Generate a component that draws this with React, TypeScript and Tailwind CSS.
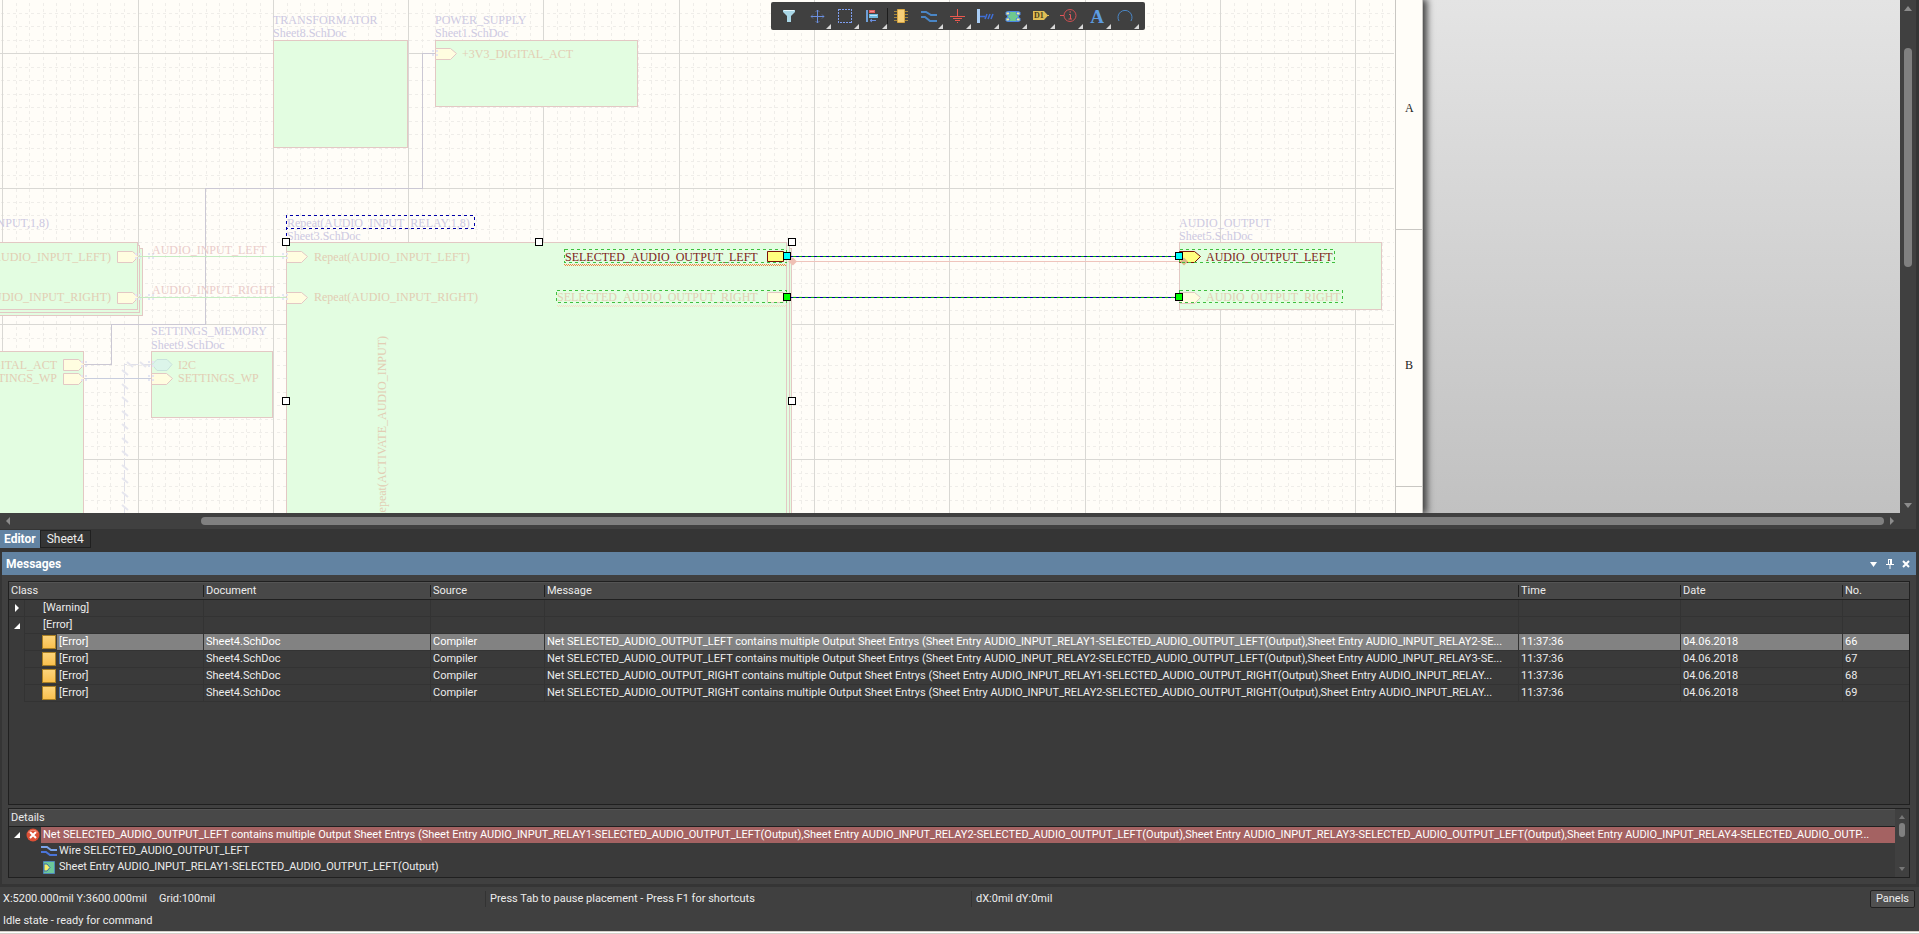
import type { ReactNode } from 'react';
import { useState } from 'react';

const INK = '#cdc9e2';
const RUST = '#e2cdb4';
const EDGE = '#e3c8c4';
const SHEET = '#e3fde1';

const majorX = [2, 138, 273, 408, 543, 679, 814, 949, 1085, 1220, 1355];
const majorY = [53, 188, 324, 459, 594, 729];
const minorOffsets = [14, 27, 41, 54, 68, 81, 95, 108, 122];

const minorX = [-133, ...majorX].flatMap((x) => minorOffsets.map((o) => x + o)).filter((x) => x > 0 && x < 1394);
const minorY = [-82, ...majorY].flatMap((y) => minorOffsets.map((o) => y + o)).filter((y) => y > 0);

function Grid() {
  return (
    <g shapeRendering="crispEdges">
      <g stroke="#efede9" strokeDasharray="3 3">
        {minorX.map((x) => (
          <line key={x} x1={x + 0.5} x2={x + 0.5} y1={3} y2={900} />
        ))}
        {minorY.map((y) => (
          <line key={y} x1={1} x2={1394} y1={y + 0.5} y2={y + 0.5} />
        ))}
      </g>
      <g stroke="#d9d8d4">
        {majorX.map((x) => (
          <line key={x} x1={x + 0.5} x2={x + 0.5} y1={0} y2={900} />
        ))}
        {majorY.map((y) => (
          <line key={y} x1={0} x2={1394} y1={y + 0.5} y2={y + 0.5} />
        ))}
      </g>
    </g>
  );
}

type PortProps = { x: number; y: number; fill?: string; stroke?: string; flat?: boolean };

function Port({ x, y, fill = '#fffde0', stroke = EDGE, flat }: PortProps) {
  const d = flat
    ? `M${x} ${y - 5}h16v10h-16z`
    : `M${x} ${y - 5}h15l6 5l-6 6h-15z`;
  return <path d={d} fill={fill} stroke={stroke} />;
}

function Joint({ x, y }: { x: number; y: number }) {
  return (
    <g fill="#e4e6f2" shapeRendering="crispEdges">
      <rect x={x - 3} y={y - 3} width="2" height="2" />
      <rect x={x + 1} y={y - 3} width="2" height="2" />
      <rect x={x - 3} y={y + 1} width="2" height="2" />
      <rect x={x + 1} y={y + 1} width="2" height="2" />
    </g>
  );
}

function Handle({ x, y, fill = '#ffffff' }: { x: number; y: number; fill?: string }) {
  return <rect x={x - 3.5} y={y - 3.5} width="7" height="7" fill={fill} stroke="#000" shapeRendering="crispEdges" />;
}

function SelectedWire({ y }: { y: number }) {
  return (
    <g shapeRendering="crispEdges">
      <line x1="790" x2="1176" y1={y} y2={y} stroke="#00b000" />
      <line x1="790" x2="1176" y1={y} y2={y} stroke="#0000a8" strokeDasharray="3 3" />
    </g>
  );
}

function Outline({ x, y, w, h }: { x: number; y: number; w: number; h: number }) {
  return (
    <rect x={x} y={y} width={w} height={h} fill="none" stroke="#3fbf3f" strokeDasharray="3 3" shapeRendering="crispEdges" />
  );
}

function Schematic() {
  const slashes = Array.from({ length: 30 }, (_, i) => 372 + Math.round(i * 13.5));
  return (
    <svg
      className="absolute left-0 top-0 h-full w-[1423px] bg-[#fffdf8] font-['Liberation_Serif',serif] text-[12px]"
      role="img"
      aria-label="Schematic sheet"
    >
      <Grid />
      {/* Sheet border */}
      <g stroke="#c9c7c3" shapeRendering="crispEdges">
        <rect x="1395" y="-1" width="27" height="2000" fill="#fffdf8" stroke="none" />
        <path d="M1395.5 0V2000M1422.5 0V2000M1395 229.5H1422M1395 486.5H1422" fill="none" />
      </g>
      <text x="1405" y="112" fill="#222">A</text>
      <text x="1405" y="369" fill="#222">B</text>

      {/* Supply and control wires */}
      <g fill="none" shapeRendering="crispEdges">
        <path d="M435 53.5H422.5V188.5H205.5V324.5H111.5V364.5H84" stroke="#cbc8d4" />
        <path d="M84 378.5H151" stroke="#c8cdde" />
        <path d="M151 364.5H124.5V900" stroke="#e0e0e9" strokeDasharray="9 3" />
      </g>
      <g stroke="#e6e6ee" strokeWidth="2">
        <path d="M127 362l6 5M140 362l6 5" />
        {slashes.map((y) => (
          <line key={y} x1="122" x2="128" y1={y - 2} y2={y + 3} />
        ))}
      </g>

      {/* Sheet symbols */}
      <g fill={SHEET} stroke={EDGE} shapeRendering="crispEdges">
        <rect x="273.5" y="40.5" width="134" height="107" />
        <rect x="435.5" y="40.5" width="202" height="66" />
        <rect x="-10.5" y="248.5" width="153" height="67" />
        <rect x="-10.5" y="245.5" width="150" height="67" />
        <rect x="-10.5" y="242.5" width="148" height="67" />
        <rect x="-10.5" y="351.5" width="94" height="900" />
        <rect x="151.5" y="351.5" width="121" height="66" />
        <rect x="290.5" y="248.5" width="501" height="900" />
        <rect x="288.5" y="245.5" width="501" height="900" />
        <rect x="286.5" y="242.5" width="500" height="900" />
        <rect x="1179.5" y="242.5" width="202" height="67" />
      </g>
      <path d="M138 256.5H286M138 297.5H286" stroke="#c5ecc2" shapeRendering="crispEdges" />
      <path d="M792 261.5H1180" stroke="#efc4bc" shapeRendering="crispEdges" />
      <path d="M788 261.5l5 -4l4 4l-4 4z" fill="#efc0b4" />

      <Port x={435.5} y={53.5} />
      <Port x={117.5} y={256.5} />
      <Port x={117.5} y={297.5} />
      <Port x={63.5} y={364.5} />
      <Port x={63.5} y={378.5} />
      <Port x={286.5} y={256.5} />
      <Port x={286.5} y={297.5} />
      <Port x={151.5} y={378.5} />
      <path d="M152 364.5l5 -5h10l5 5l-5 6h-10z" fill="#dcf5ea" stroke="#c8e2dc" />
      <Port x={767.5} y={256.5} fill="#ffff7f" stroke="#7c1408" flat />
      <Port x={767.5} y={297.5} flat />
      <Port x={1179.5} y={256.5} fill="#ffff7f" stroke="#7c1408" />
      <Port x={1179.5} y={297.5} />
      <path d="M1180 261.5l4 -4l4 4l-4 4z" fill="#d9b98c" />

      <Joint x={435} y={53} />
      <Joint x={138} y={256} />
      <Joint x={151} y={256} />
      <Joint x={285} y={256} />
      <Joint x={138} y={297} />
      <Joint x={151} y={297} />
      <Joint x={285} y={297} />
      <Joint x={84} y={364} />
      <Joint x={84} y={378} />
      <Joint x={151} y={364} />
      <Joint x={151} y={378} />

      {/* Designators and file names */}
      <g fill={INK}>
        <text x="273" y="24">TRANSFORMATOR</text>
        <text x="273" y="37">Sheet8.SchDoc</text>
        <text x="435" y="24">POWER_SUPPLY</text>
        <text x="435" y="37">Sheet1.SchDoc</text>
        <text x="49" y="227" textAnchor="end">Repeat(AUDIO_INPUT,1,8)</text>
        <text x="287" y="227">Repeat(AUDIO_INPUT_RELAY,1,8)</text>
        <text x="287" y="240">Sheet3.SchDoc</text>
        <text x="151" y="335">SETTINGS_MEMORY</text>
        <text x="151" y="349">Sheet9.SchDoc</text>
        <text x="1179" y="227">AUDIO_OUTPUT</text>
        <text x="1179" y="240">Sheet5.SchDoc</text>
      </g>

      {/* Net labels */}
      <g fill="#eaccca">
        <text x="152" y="254">AUDIO_INPUT_LEFT</text>
        <text x="152" y="294">AUDIO_INPUT_RIGHT</text>
      </g>

      {/* Sheet entries */}
      <g fill={RUST}>
        <text x="462" y="58">+3V3_DIGITAL_ACT</text>
        <text x="111" y="261" textAnchor="end">Repeat(AUDIO_INPUT_LEFT)</text>
        <text x="111" y="301" textAnchor="end">Repeat(AUDIO_INPUT_RIGHT)</text>
        <text x="57" y="369" textAnchor="end">+3V3_DIGITAL_ACT</text>
        <text x="57" y="382" textAnchor="end">SETTINGS_WP</text>
        <text x="178" y="369">I2C</text>
        <text x="178" y="382">SETTINGS_WP</text>
        <text x="314" y="261">Repeat(AUDIO_INPUT_LEFT)</text>
        <text x="314" y="301">Repeat(AUDIO_INPUT_RIGHT)</text>
        <text transform="translate(386 336) rotate(-90)" textAnchor="end">Repeat(ACTIVATE_AUDIO_INPUT)</text>
        <text x="557" y="301">SELECTED_AUDIO_OUTPUT_RIGHT</text>
        <text x="1206" y="301">AUDIO_OUTPUT_RIGHT</text>
      </g>
      <g fill="#7d2217">
        <text x="565" y="261">SELECTED_AUDIO_OUTPUT_LEFT</text>
        <text x="1206" y="261">AUDIO_OUTPUT_LEFT</text>
      </g>

      {/* Compile error underlines */}
      <g shapeRendering="crispEdges">
        <path d="M564 264.5H786M565 265.5H786" stroke="#f08040" strokeDasharray="1 1" />
        <path d="M557 305.5H786M558 306.5H786" stroke="#f6dcc8" strokeDasharray="1 1" />
      </g>

      {/* Selection */}
      <path
        d="M286.5 242V215.5H474.5V228.5H286.5"
        fill="none"
        stroke="#0000a8"
        strokeDasharray="3 3"
        shapeRendering="crispEdges"
      />
      <Outline x={564.5} y={249.5} w={222} h={13} />
      <Outline x={556.5} y={290.5} w={230} h={12} />
      <Outline x={1179.5} y={249.5} w={155} h={13} />
      <Outline x={1179.5} y={290.5} w={163} h={12} />
      <SelectedWire y={256.5} />
      <SelectedWire y={297.5} />
      <Handle x={286} y={242} />
      <Handle x={539} y={242} />
      <Handle x={792} y={242} />
      <Handle x={286} y={401} />
      <Handle x={792} y={401} />
      <Handle x={787} y={256} fill="#00ffff" />
      <Handle x={787} y={297} fill="#00ff00" />
      <Handle x={1179} y={256} fill="#00ffff" />
      <Handle x={1179} y={297} fill="#00ff00" />
    </svg>
  );
}

const tools: { label: string; menu?: boolean; divided?: boolean; icon: ReactNode }[] = [
  {
    label: 'Filter',
    icon: (
      <>
        <path d="M2 2h12v2l-4 4v6h-4v-6l-4 -4z" fill="#a9d6e6" />
        <path d="M3 2h10v1h-10z" fill="#e4f6fb" />
      </>
    ),
  },
  {
    label: 'Move',
    menu: true,
    icon: (
      <>
        <path d="M8.500 2v13M2 8.500h13" stroke="#6b8fe0" fill="none" shapeRendering="crispEdges" />
        <path d="M6.500 4l2 -2l2 2M6.500 13l2 2l2 -2M4 6.500l-2 2l2 2M13 6.500l2 2l-2 2" stroke="#6b8fe0" strokeOpacity="0.6" fill="none" />
      </>
    ),
  },
  {
    label: 'Select',
    menu: true,
    icon: <rect x="1.500" y="1.500" width="13" height="13" fill="none" stroke="#7f9ff0" strokeDasharray="2 1" shapeRendering="crispEdges" />,
  },
  {
    label: 'Align',
    menu: true,
    icon: (
      <>
        <path d="M1 2h2v12h-2z" fill="#6f9fd8" />
        <path d="M4 2h6v3h-6z" fill="#e05c5c" />
        <path d="M5 3h4v1h-4z" fill="#f09090" />
        <path d="M4 6h9v4h-9z" fill="#6fb8e0" />
        <path d="M5 7h7v1h-7z" fill="#bfe6f5" />
        <path d="M5 12.500h6M7 11l-2 1.500l2 1.500" stroke="#6b8fe0" fill="none" />
      </>
    ),
  },
  {
    label: 'Place part',
    divided: true,
    icon: (
      <>
        <path d="M1 3.500h14M1 6.500h14M1 9.500h14M1 12.500h14" stroke="#a8873a" />
        <path d="M4.500 1.500h7v13h-7z" fill="#f7cf78" stroke="#d9a741" />
      </>
    ),
  },
  {
    label: 'Place wire',
    menu: true,
    icon: <path d="M0 4h5l5 3h6M0 9h4l5 4h7" fill="none" stroke="#4a86c5" strokeWidth="2" />,
  },
  {
    label: 'Place ground',
    menu: true,
    icon: <path d="M8.500 1v7M1 8.500h15M4 10.500h9M6 12.500h5M8 14.500h1" fill="none" stroke="#e8594f" shapeRendering="crispEdges" />,
  },
  {
    label: 'Place harness',
    menu: true,
    icon: (
      <>
        <path d="M0 1h3v14h-3z" fill="#a9cdf5" />
        <path d="M3 8.500h5M8 11l2 -5M11 11l2 -5M14 11l2 -5" fill="none" stroke="#3f6fd8" strokeWidth="1.500" />
      </>
    ),
  },
  {
    label: 'Place sheet symbol',
    menu: true,
    icon: (
      <>
        <path d="M2.500 3.500h11v10h-11z" fill="#6fc98f" stroke="#4a86e0" />
        <path d="M1 4h3l1 1l-1 2h-3zM1 10h3l1 1l-1 2h-3zM15 4h-3l-1 1l1 2h3zM15 10h-3l-1 1l1 2h3z" fill="#f3ee9a" stroke="#4a86e0" />
      </>
    ),
  },
  {
    label: 'Place port',
    menu: true,
    icon: (
      <>
        <path d="M0 3h11l4 4.500l-4 4.500h-11z" fill="#e0bd55" />
        <path d="M12 7.500h4" stroke="#e0bd55" />
        <text x="1" y="10" fontSize="8" fontWeight="bold" fill="#4a3d18">D1</text>
      </>
    ),
  },
  {
    label: 'Place directive',
    menu: true,
    icon: (
      <>
        <circle cx="9" cy="7.500" r="6" fill="none" stroke="#cf4f52" />
        <path d="M-1 7.500h4M8 6.500h1.500v4.500M7.500 11h3.500M8.500 4h1.500" fill="none" stroke="#e0575a" />
      </>
    ),
  },
  {
    label: 'Place text',
    menu: true,
    icon: (
      <text x="8" y="15" fontSize="19" fontWeight="bold" textAnchor="middle" fill="#5d9ce0">A</text>
    ),
  },
  {
    label: 'Place arc',
    menu: true,
    icon: <path d="M2 13a7 7 0 1 1 12 0" fill="none" stroke="#4a86c5" />,
  },
];

function ActiveBar() {
  return (
    <div className="pointer-events-none absolute inset-x-0 top-0.5 flex justify-center">
      <div className="pointer-events-auto flex h-7 items-center rounded-xs bg-[#404040] pl-1 pr-1.5">
        {tools.map((tool) => (
          <button
            key={tool.label}
            aria-label={tool.label}
            className={`relative flex h-7 w-7 items-center justify-center hover:bg-[#505050] ${
              tool.divided ? 'before:absolute before:left-0 before:top-1.5 before:h-4 before:w-px before:bg-[#1c1c1c]' : ''
            }`}
          >
            <svg className="h-4 w-4 overflow-visible font-['Liberation_Serif',serif]" viewBox="0 0 16 16" aria-hidden="true">
              {tool.icon}
            </svg>
            {tool.menu && (
              <svg className="absolute bottom-px right-0 h-[5px] w-[5px]" viewBox="0 0 5 5" aria-hidden="true">
                <path d="M5 0v5h-5z" fill="#d8d8d8" />
              </svg>
            )}
          </button>
        ))}
      </div>
    </div>
  );
}

function Triangle({ d, className = 'text-[#8c8c8c]' }: { d: string; className?: string }) {
  return (
    <svg className={`h-2 w-2 shrink-0 ${className}`} viewBox="0 0 8 8" aria-hidden="true">
      <path d={d} fill="currentColor" />
    </svg>
  );
}

const UP = 'M4 2l4 5h-8z';
const DOWN = 'M0 2h8l-4 5z';
const LEFT = 'M6 0v8l-4 -4z';
const RIGHT = 'M2 0v8l4 -4z';
const OPEN = 'M7 1v6h-6z';

const messages = [
  {
    text: 'Net SELECTED_AUDIO_OUTPUT_LEFT contains multiple Output Sheet Entrys (Sheet Entry AUDIO_INPUT_RELAY1-SELECTED_AUDIO_OUTPUT_LEFT(Output),Sheet Entry AUDIO_INPUT_RELAY2-SE...',
    no: 66,
  },
  {
    text: 'Net SELECTED_AUDIO_OUTPUT_LEFT contains multiple Output Sheet Entrys (Sheet Entry AUDIO_INPUT_RELAY2-SELECTED_AUDIO_OUTPUT_LEFT(Output),Sheet Entry AUDIO_INPUT_RELAY3-SE...',
    no: 67,
  },
  {
    text: 'Net SELECTED_AUDIO_OUTPUT_RIGHT contains multiple Output Sheet Entrys (Sheet Entry AUDIO_INPUT_RELAY1-SELECTED_AUDIO_OUTPUT_RIGHT(Output),Sheet Entry AUDIO_INPUT_RELAY...',
    no: 68,
  },
  {
    text: 'Net SELECTED_AUDIO_OUTPUT_RIGHT contains multiple Output Sheet Entrys (Sheet Entry AUDIO_INPUT_RELAY2-SELECTED_AUDIO_OUTPUT_RIGHT(Output),Sheet Entry AUDIO_INPUT_RELAY...',
    no: 69,
  },
];

const cell = 'h-[17px] truncate border-b border-l border-[#333333] p-0 pl-0.5';

function MessageTable() {
  const [selected, setSelected] = useState(66);
  return (
    <div className="h-[224px] overflow-hidden border border-[#202020] bg-[#3a3a3a]">
      <table className="w-full table-fixed border-separate border-spacing-0 leading-4">
        <colgroup>
          <col className="w-[15px]" />
          <col className="w-[179px]" />
          <col className="w-[227px]" />
          <col className="w-[114px]" />
          <col />
          <col className="w-[162px]" />
          <col className="w-[162px]" />
          <col className="w-[67px]" />
        </colgroup>
        <thead>
          <tr className="bg-[#484848] text-left">
            <th colSpan={2} className="h-[18px] border-b border-t border-b-[#202020] border-t-[#545454] p-0 pl-0.5 font-normal">Class</th>
            {['Document', 'Source', 'Message', 'Time', 'Date', 'No.'].map((name) => (
              <th key={name} className="border-b border-t border-b-[#202020] border-t-[#545454] p-0 font-normal">
                <span className="block h-3 border-l border-[#202020] pl-0.5 leading-3">{name}</span>
              </th>
            ))}
          </tr>
        </thead>
        <tbody>
          {['[Warning]', '[Error]'].map((name) => (
            <tr key={name}>
              <td className={`p-0 pl-1 ${name === '[Warning]' ? 'border-b border-[#333333]' : ''}`}>
                <Triangle d={name === '[Warning]' ? RIGHT : OPEN} className="text-white" />
              </td>
              <td className="h-[17px] border-b border-l border-[#333333] p-0 pl-[18px]">{name}</td>
              {[0, 1, 2, 3, 4, 5].map((i) => (
                <td key={i} className={cell} />
              ))}
            </tr>
          ))}
          {messages.map((m) => {
            const active = m.no === selected;
            const fill = active ? 'bg-[#828282] text-white' : '';
            return (
              <tr key={m.no} onClick={() => setSelected(m.no)}>
                <td />
                <td className="h-[17px] border-b border-l border-[#333333] p-0 pl-[17px]">
                  <div className="flex h-4">
                    <span className="my-px h-3.5 w-3.5 shrink-0 border border-[#a97f24] bg-linear-to-b from-[#fcd47a] to-[#f9c04e]" />
                    <span className={`ml-px flex-1 pl-0.5 ${fill}`}>[Error]</span>
                  </div>
                </td>
                <td className={`${cell} ${fill}`}>Sheet4.SchDoc</td>
                <td className={`${cell} ${fill}`}>Compiler</td>
                <td className={`${cell} ${fill}`}>{m.text}</td>
                <td className={`${cell} ${fill}`}>11:37:36</td>
                <td className={`${cell} ${fill}`}>04.06.2018</td>
                <td className={`${cell} ${fill}`}>{m.no}</td>
              </tr>
            );
          })}
        </tbody>
      </table>
    </div>
  );
}

function Details() {
  return (
    <div className="mt-[3px] flex h-[70px] border border-[#202020] bg-[#3a3a3a]">
      <div className="min-w-0 flex-1">
        <h3 className="h-[18px] border-b border-t border-b-[#202020] border-t-[#545454] bg-[#484848] pl-0.5 leading-4">Details</h3>
        <ul className="leading-4">
          <li className="flex items-center">
            <Triangle d={OPEN} className="mx-1 text-white" />
            <svg className="h-4 w-4 shrink-0" viewBox="0 0 16 16" aria-hidden="true">
              <circle cx="8" cy="8" r="6.500" fill="#dc4f35" />
              <path d="M5 5l6 6M11 5l-6 6" stroke="#fff" strokeWidth="2" />
              <path d="M3 5.500a6 5 0 0 1 10 0" fill="none" stroke="#f0917d" />
            </svg>
            <span className="min-w-0 flex-1 truncate bg-[#a46262] pl-0.5 text-white">
              Net SELECTED_AUDIO_OUTPUT_LEFT contains multiple Output Sheet Entrys (Sheet Entry AUDIO_INPUT_RELAY1-SELECTED_AUDIO_OUTPUT_LEFT(Output),Sheet Entry AUDIO_INPUT_RELAY2-SELECTED_AUDIO_OUTPUT_LEFT(Output),Sheet Entry AUDIO_INPUT_RELAY3-SELECTED_AUDIO_OUTPUT_LEFT(Output),Sheet Entry AUDIO_INPUT_RELAY4-SELECTED_AUDIO_OUTP...
            </span>
          </li>
          <li className="flex items-center gap-0.5 pl-8">
            <svg className="h-4 w-4" viewBox="0 0 16 16" aria-hidden="true">
              <path d="M0 4h6l4 3h6" fill="none" stroke="#7ba4ea" strokeWidth="2" />
              <path d="M0 9h5l4 3h7" fill="none" stroke="#4a74d8" strokeWidth="2" />
            </svg>
            Wire SELECTED_AUDIO_OUTPUT_LEFT
          </li>
          <li className="flex items-center gap-0.5 pl-8">
            <svg className="h-4 w-4" viewBox="0 0 16 16" aria-hidden="true">
              <path d="M2.500 2.500h11v12h-11z" fill="#6cc79a" stroke="#4f86b8" />
              <path d="M3 5h3l3 3.500l-3 3.500h-3z" fill="#f5f06a" stroke="#3b6fa8" />
            </svg>
            Sheet Entry AUDIO_INPUT_RELAY1-SELECTED_AUDIO_OUTPUT_LEFT(Output)
          </li>
        </ul>
      </div>
      <div className="flex w-3.5 flex-col items-center justify-between bg-[#404040] py-1">
        <Triangle d="M4 2l3 4h-6z" className="text-[#777777]" />
        <div className="mb-auto mt-0.5 h-3.5 w-1.5 rounded-full bg-[#808080]" />
        <Triangle d="M1 2h6l-3 4z" className="text-[#777777]" />
      </div>
    </div>
  );
}

function MessagesPanel() {
  return (
    <section className="ml-0.5 mr-[3px] bg-[#404040]">
      <header className="flex h-[23px] items-center bg-[#6283a2] pl-1 pr-0.5 text-white">
        <h2 className="flex-1 text-[12px] font-bold leading-4">Messages</h2>
        <div className="flex">
          <button aria-label="Panel menu" className="flex h-4 w-4 items-center justify-center">
            <Triangle d="M0 2h7l-3.500 5z" className="text-white" />
          </button>
          <button aria-label="Pin" className="flex h-4 w-4 items-center justify-center">
            <svg className="h-2.5 w-2.5" viewBox="0 0 10 10" aria-hidden="true">
              <path d="M3.500 0v5.500M5.500 0.500v5M6.500 0v5.500M3 0.500h4M1 5.500h8M5 6v4" stroke="#fff" fill="none" />
            </svg>
          </button>
          <button aria-label="Close" className="flex h-4 w-4 items-center justify-center">
            <svg className="h-2 w-2" viewBox="0 0 8 8" aria-hidden="true">
              <path d="M1 1l6 6M7 1l-6 6" stroke="#fff" strokeWidth="2" />
            </svg>
          </button>
        </div>
      </header>
      <div className="px-1.5 pb-1.5 pt-1.5">
        <MessageTable />
        <Details />
      </div>
    </section>
  );
}

export default function App() {
  return (
    <div className="flex h-screen flex-col overflow-hidden bg-[#353535] font-['Roboto',sans-serif] text-[11px] text-[#ececec]">
      <div className="relative mr-[3px] flex min-h-0 flex-1 flex-col bg-[#404040]">
        <div className="flex min-h-0 flex-1">
          <div className="relative min-w-0 flex-1 overflow-hidden bg-linear-to-b from-[#e4e4e4] to-[#c1c1c1]">
            <div className="absolute left-0 top-0 h-full w-[1423px] shadow-[3px_0_7px_1px_#404040]" />
            <Schematic />
          </div>
          <div className="flex w-4 flex-col items-center justify-between py-1">
            <Triangle d={UP} />
            <div className="mb-auto mt-9 h-[219px] w-2 rounded-full bg-[#808080]" />
            <Triangle d={DOWN} />
          </div>
        </div>
        <div className="flex h-4 items-center pl-1 pr-5">
          <Triangle d={LEFT} />
          <div className="ml-[189px] mr-1 h-2 flex-1 rounded-full bg-[#808080]" />
          <Triangle d={RIGHT} />
        </div>
        <ActiveBar />
      </div>
      <nav className="flex h-[23px] shrink-0 items-start pt-px text-[12px] leading-4">
        <button className="h-[18px] bg-[#6283a2] px-1 font-bold text-white">Editor</button>
        <button className="h-[18px] border border-[#202020] px-1.5">Sheet4</button>
      </nav>
      <MessagesPanel />
      <footer className="mt-[3px] bg-[#404040]">
        <div className="flex h-6 items-center pl-[3px] pr-1">
          <div className="flex w-[482px] gap-3">
            <span>X:5200.000mil Y:3600.000mil</span>
            <span>Grid:100mil</span>
          </div>
          <div className="w-[486px] border-l border-[#333333] pl-1 leading-4">Press Tab to pause placement - Press F1 for shortcuts</div>
          <div className="flex-1 border-l border-[#333333] pl-1 leading-4">dX:0mil dY:0mil</div>
          <button className="h-[18px] rounded-xs border border-[#202020] bg-[#505050] px-[5px] leading-4">Panels</button>
        </div>
        <div className="h-5 pl-[3px] leading-5">Idle state - ready for command</div>
        <div className="h-[3px] border-y border-[#d4d0c8] bg-white" />
      </footer>
    </div>
  );
}
